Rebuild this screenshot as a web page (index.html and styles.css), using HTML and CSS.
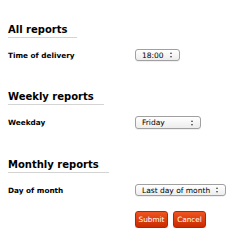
FILE: index.html
```html
<!DOCTYPE html>
<html>
<head>
<meta charset="utf-8">
<link rel="stylesheet" href="styles.css">
</head>
<body>
<form class="settings">
  <section class="group">
    <h2 class="group-title">All reports</h2>
    <div class="row">
      <label class="row-label">Time of delivery</label>
      <div class="select select-time"><span class="select-value">18:00</span><span class="select-arrows"></span></div>
    </div>
  </section>
  <section class="group">
    <h2 class="group-title">Weekly reports</h2>
    <div class="row">
      <label class="row-label">Weekday</label>
      <div class="select select-day"><span class="select-value">Friday</span><span class="select-arrows"></span></div>
    </div>
  </section>
  <section class="group">
    <h2 class="group-title">Monthly reports</h2>
    <div class="row">
      <label class="row-label">Day of month</label>
      <div class="select select-month"><span class="select-value">Last day of month</span><span class="select-arrows"></span></div>
    </div>
  </section>
  <div class="actions">
    <button type="button" class="btn">Submit</button>
    <button type="button" class="btn">Cancel</button>
  </div>
</form>
</body>
</html>
```
FILE: styles.css
```css
html, body {
  margin: 0;
  padding: 0;
  background: #fff;
}
body {
  font-family: "DejaVu Sans", Verdana, sans-serif;
  color: #000;
}
.settings {
  padding: 24px 8px 0 8px;
  display: flex;
  flex-direction: column;
}
.group {
  display: flex;
  flex-direction: column;
  align-items: flex-start;
  margin-bottom: 30px;
}
.group-title {
  margin: 0;
  font-size: 10px;
  font-weight: bold;
  line-height: 12px;
  padding: 0 10px 1px 0;
  border-bottom: 1px solid #d4d4d4;
}
.row {
  display: flex;
  align-items: center;
  margin-top: 11px;
}
.row-label {
  width: 127px;
  font-size: 7.3px;
  font-weight: bold;
  white-space: nowrap;
}
.select {
  box-sizing: border-box;
  height: 12px;
  border: 1px solid #a0a0a0;
  border-radius: 3px;
  background: linear-gradient(#ffffff, #ededed);
  display: flex;
  align-items: center;
  justify-content: space-between;
  padding: 0 6px 0 6px;
  font-size: 7.5px;
  white-space: nowrap;
  box-shadow: 0 1px 0 rgba(0,0,0,0.06);
}
.select-time { width: 45px; }
.select-day { width: 66px; height: 13px; }
.select-month { width: 91px; }
.select-arrows {
  width: 3px;
  height: 6px;
  position: relative;
  flex: none;
}
.select-arrows::before,
.select-arrows::after {
  content: "";
  position: absolute;
  left: 0;
  border-left: 1.5px solid transparent;
  border-right: 1.5px solid transparent;
}
.select-arrows::before {
  top: 0;
  border-bottom: 2px solid #444;
}
.select-arrows::after {
  bottom: 0;
  border-top: 2px solid #444;
}
.actions {
  display: flex;
  gap: 5px;
  padding-left: 127px;
  margin-top: -15px;
}
.btn {
  box-sizing: border-box;
  width: 33px;
  font-family: "DejaVu Sans", Verdana, sans-serif;
  font-size: 7.3px;
  color: #fff;
  height: 17px;
  padding: 0;
  border: 1px solid #b52600;
  border-radius: 3px;
  background: linear-gradient(#ef5420, #c92a00);
  box-shadow: 0 1px 1px rgba(0,0,0,0.2);
}
```
